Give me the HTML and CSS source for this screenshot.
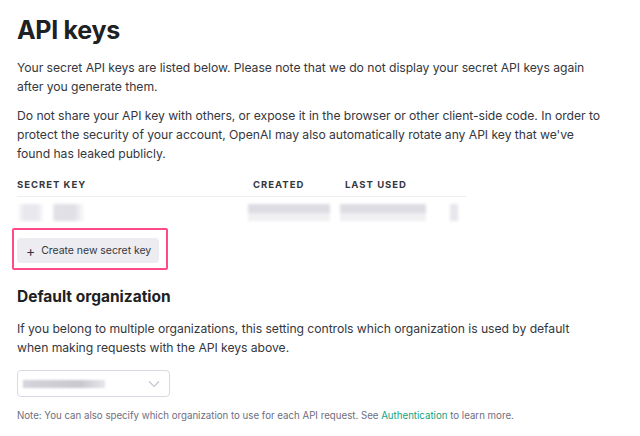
FILE: index.html
```html
<!DOCTYPE html>
<html>
<head>
<meta charset="utf-8">
<link rel="stylesheet" href="styles.css">
</head>
<body>
<main class="page">
  <h1 class="title">API keys</h1>
  <p class="text p1">Your secret API keys are listed below. Please note that we do not display your secret API keys again after you generate them.</p>
  <p class="text p2">Do not share your API key with others, or expose it in the browser or other client-side code. In order to protect the security of your account, OpenAI may also automatically rotate any API key that we've found has leaked publicly.</p>

  <div class="table">
    <div class="thead">
      <span class="col-key">SECRET KEY</span>
      <span class="col-created">CREATED</span>
      <span class="col-used">LAST USED</span>
    </div>
    <div class="row">
      <div class="col-key"><span class="blur b-key"></span></div>
      <div class="col-created"><span class="blur b-created"></span></div>
      <div class="col-used"><span class="blur b-used"></span></div>
      <div class="col-act"><span class="blur b-act"></span></div>
    </div>
  </div>

  <div class="highlight">
    <button class="btn"><span class="plus">+</span>Create new secret key</button>
  </div>

  <h2 class="subtitle">Default organization</h2>
  <p class="text p3">If you belong to multiple organizations, this setting controls which organization is used by default when making requests with the API keys above.</p>

  <div class="select">
    <span class="blur b-org"></span>
    <svg class="chev" width="12" height="8" viewBox="0 0 12 8"><path d="M1 1.5l5 5 5-5" fill="none" stroke="#c5c5d2" stroke-width="1.2"/></svg>
  </div>

  <p class="note">Note: You can also specify which organization to use for each API request. See <a class="link">Authentication</a> to learn more.</p>
</main>
</body>
</html>
```
FILE: styles.css
```css
* { box-sizing: border-box; }
html, body { margin: 0; padding: 0; background: #fff; }
body { font-family: "Inter", "Noto Sans", sans-serif; color: #353740; }
.page { padding: 14px 0 0 17px; width: 640px; }
.title { margin: 0; font-size: 25px; line-height: 32px; font-weight: 700; color: #202123; letter-spacing: -0.3px; }
.text { margin: 0; font-size: 12.2px; line-height: 19px; color: #353740; letter-spacing: -0.05px; }
.p1 { margin-top: 12px; width: 586px; }
.p2 { margin-top: 10px; width: 586px; }
.table { margin-top: 15px; width: 449px; }
.thead { display: flex; font-size: 9.5px; font-weight: 700; letter-spacing: 1px; color: #353740; height: 19px; line-height: 14px; border-bottom: 1px solid #ececf1; }
.col-key { width: 236px; }
.col-created { width: 92px; }
.col-used { width: 100px; }
.col-act { width: 20px; }
.row { display: flex; height: 31px; padding-top: 7px; }
.blur { display: block; height: 17px; filter: blur(1.5px); }
.b-key { width: 68px; background: linear-gradient(90deg, #fff 0, #e8e8ee 10%, #e8e8ee 30%, #fff 40%, #fff 52%, #e0e0e6 55%, #e0e0e6 85%, #fff 100%); }
.b-created { width: 82px; margin-left: -5px; background: linear-gradient(180deg, #dcdce2 0, #dcdce2 55%, #f0f0f3 55%, #f0f0f3 100%); }
.b-used { width: 86px; margin-left: -5px; background: linear-gradient(180deg, #dcdce2 0, #dcdce2 55%, #f0f0f3 55%, #f0f0f3 100%); }
.b-act { width: 8px; margin-left: 5px; background: #e6e6ec; }
.highlight { margin: 0 0 0 -5px; width: 156px; height: 42px; border: 2px solid #ff4a86; border-radius: 2px; padding: 8px 0 0 3px; }
.btn { display: flex; align-items: center; white-space: nowrap; width: 142px; height: 25px; padding: 0 0 0 9px; border: 0; border-radius: 4px; background: #ececf1; font-family: "Inter", "Noto Sans", sans-serif; font-size: 10.5px; color: #353740; letter-spacing: -0.05px; cursor: pointer; }
.plus { font-size: 14px; margin-right: 6px; line-height: 1; }
.subtitle { margin: 16px 0 0; font-size: 15.5px; line-height: 22px; font-weight: 700; color: #202123; }
.p3 { margin-top: 11px; width: 586px; }
.select { display: flex; align-items: center; justify-content: space-between; margin-top: 13px; width: 153px; height: 27px; border: 1px solid #d9d9e3; border-radius: 4px; padding: 0 9px 0 5px; }
.b-org { width: 82px; height: 8px; background: linear-gradient(90deg, #d4d4da 0, #c8c8cf 70%, #e6e6ea 100%); filter: blur(1.3px); }
.chev { display: block; }
.note { margin: 12px 0 0; font-size: 9.7px; line-height: 14px; color: #6e6e80; }
.link { color: #10a37f; }
```
